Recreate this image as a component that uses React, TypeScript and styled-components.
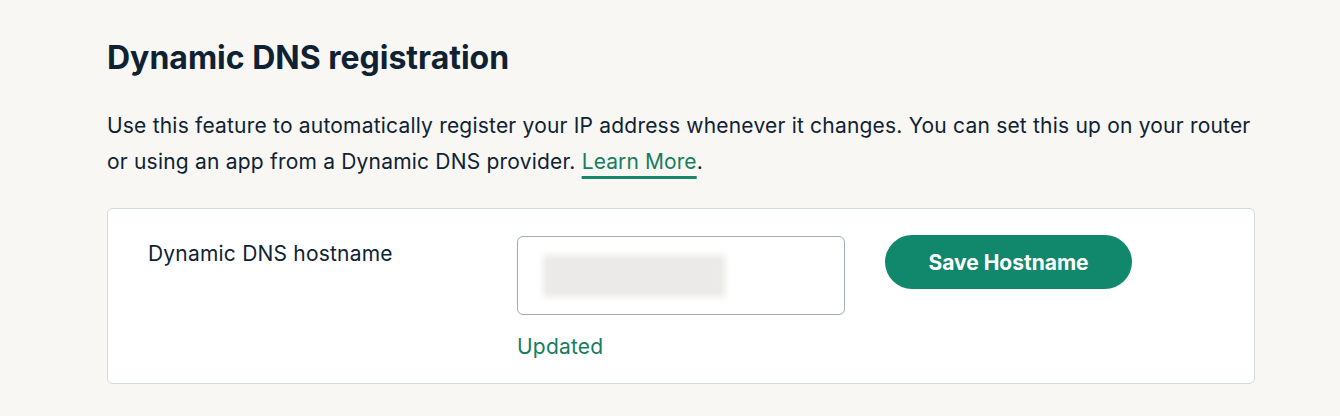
import React from 'react'
import styled, { createGlobalStyle } from 'styled-components'

const GlobalStyle = createGlobalStyle`
  html, body {
    margin: 0;
    padding: 0;
    background: #f8f7f3;
  }
  body {
    font-family: Inter, 'Noto Sans', sans-serif;
    color: #0f2233;
  }
`

const Page = styled.main`
  padding: 38px 86px 30px 107px;
  min-height: 416px;
  box-sizing: border-box;
`

const Title = styled.h2`
  margin: 0 0 30px;
  font-size: 32px;
  line-height: 40px;
  font-weight: 700;
  color: #0f2233;
`

const Intro = styled.p`
  margin: 0 0 28px;
  width: 1148px;
  font-size: 21px;
  line-height: 36px;
  letter-spacing: 0.2px;
  color: #0f2233;
`

const Link = styled.a`
  color: #177c61;
  letter-spacing: 0.1px;
  text-decoration: underline;
  text-decoration-color: #17876c;
  text-decoration-thickness: 3px;
  text-underline-offset: 7px;
`

const Card = styled.section`
  width: 1148px;
  box-sizing: border-box;
  background: #fff;
  border: 1px solid #d3d8dc;
  border-radius: 6px;
  padding: 27px 40px 24px;
  display: grid;
  grid-template-columns: 329px 328px 247px;
  column-gap: 40px;
  align-items: start;
`

const Label = styled.label`
  font-size: 21px;
  line-height: 24px;
  letter-spacing: 0.2px;
  padding-top: 6px;
`

const FieldColumn = styled.div`
  display: flex;
  flex-direction: column;
  gap: 20px;
`

const InputBox = styled.div`
  height: 79px;
  box-sizing: border-box;
  border: 1.5px solid #a3acb3;
  border-radius: 6px;
  background: #fff;
  display: flex;
  align-items: center;
  padding-left: 25px;
`

const Blurred = styled.div`
  width: 182px;
  height: 42px;
  background: #ebeae8;
  filter: blur(3px);
`

const Status = styled.span`
  font-size: 21px;
  line-height: 24px;
  letter-spacing: 0.2px;
  color: #177c61;
`

const SaveButton = styled.button`
  width: 247px;
  height: 54px;
  margin-top: -1px;
  border: none;
  border-radius: 27px;
  background: #11876c;
  color: #fff;
  font-family: Inter, 'Noto Sans', sans-serif;
  font-size: 21px;
  font-weight: 700;
  cursor: pointer;
`

export default function App() {
  return (
    <>
      <GlobalStyle />
      <Page>
        <Title>Dynamic DNS registration</Title>
        <Intro>
          Use this feature to automatically register your IP address whenever it changes. You can set this up on your router
          or using an app from a Dynamic DNS provider. <Link href="#">Learn More</Link>.
        </Intro>
        <Card>
          <Label>Dynamic DNS hostname</Label>
          <FieldColumn>
            <InputBox>
              <Blurred />
            </InputBox>
            <Status>Updated</Status>
          </FieldColumn>
          <SaveButton>Save Hostname</SaveButton>
        </Card>
      </Page>
    </>
  )
}
